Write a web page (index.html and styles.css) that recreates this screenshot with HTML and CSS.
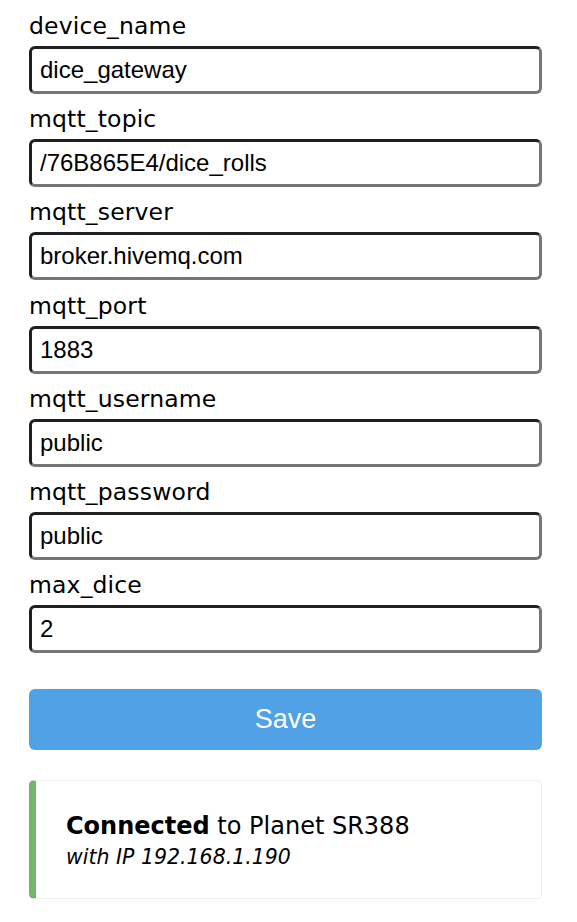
FILE: index.html
```html
<!DOCTYPE html>
<html>
<head>
<meta charset="utf-8">
<link rel="stylesheet" href="styles.css">
</head>
<body>
<div class="wrap">
  <form class="form">
    <label class="lbl">device_name</label>
    <input class="inp" type="text" value="dice_gateway">
    <label class="lbl">mqtt_topic</label>
    <input class="inp" type="text" value="/76B865E4/dice_rolls">
    <label class="lbl">mqtt_server</label>
    <input class="inp" type="text" value="broker.hivemq.com">
    <label class="lbl">mqtt_port</label>
    <input class="inp" type="text" value="1883">
    <label class="lbl">mqtt_username</label>
    <input class="inp" type="text" value="public">
    <label class="lbl">mqtt_password</label>
    <input class="inp" type="text" value="public">
    <label class="lbl">max_dice</label>
    <input class="inp" type="text" value="2">
    <button class="btn" type="button">Save</button>
  </form>
  <div class="msg">
    <div class="msg-title"><strong>Connected</strong> to Planet SR388</div>
    <div class="msg-sub"><em>with IP 192.168.1.190</em></div>
  </div>
</div>
</body>
</html>
```
FILE: styles.css
```css
html, body {
  margin: 0;
  padding: 0;
  background: #fff;
}
body {
  font-family: "DejaVu Sans", Verdana, sans-serif;
  color: #000;
}
.wrap {
  width: 513px;
  padding: 10px 0 0 29px;
}
.form {
  display: flex;
  flex-direction: column;
}
.lbl {
  display: block;
  font-size: 23.5px;
  line-height: 32px;
  height: 29px;
  letter-spacing: 0.15px;
}
.inp {
  box-sizing: border-box;
  width: 100%;
  height: 48px;
  margin: 7px 0 9.2px;
  padding: 0 8px;
  border: 3px solid #767676;
  border-top-color: #1f1f1f;
  border-left-color: #1f1f1f;
  border-radius: 6px;
  font-family: "Liberation Sans", Arial, sans-serif;
  font-size: 24px;
  color: #000;
  background: #fff;
  outline: none;
}
.btn {
  box-sizing: border-box;
  width: 100%;
  height: 61px;
  margin-top: 26.8px;
  border: 0;
  border-radius: 6px;
  background: #50a1e5;
  color: #fff;
  font-family: "Liberation Sans", Arial, sans-serif;
  font-size: 27px;
  cursor: pointer;
}
.msg {
  box-sizing: border-box;
  margin-top: 30px;
  height: 119px;
  border: 1px solid #eee;
  border-left: 7px solid #73b66b;
  border-radius: 5px;
  padding: 29px 30px 0 30px;
}
.msg-title {
  font-size: 24px;
  line-height: 32px;
}
.msg-sub {
  font-size: 20.5px;
  line-height: 30px;
}
```
